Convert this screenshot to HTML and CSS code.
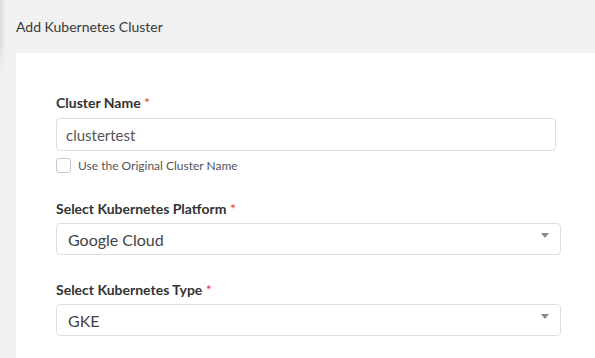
FILE: index.html
```html
<!DOCTYPE html>
<html lang="en">
<head>
    <meta charset="UTF-8">
    <meta name="viewport" content="width=device-width, initial-scale=1.0">
    <title>Add Kubernetes Cluster</title>
    <link rel="stylesheet" href="styles.css">
</head>
<body>
    <div class="side-shadow"></div>

    <div class="page-header">
        <h1>Add Kubernetes Cluster</h1>
    </div>

    <div class="card">
        <div class="form-group">
            <label class="field-label">Cluster Name <span class="req">*</span></label>
            <input type="text" class="text-input" value="clustertest">
            <label class="check-row">
                <span class="check-box"></span>
                <span class="check-text">Use the Original Cluster Name</span>
            </label>
        </div>

        <div class="form-group select-group">
            <label class="field-label">Select Kubernetes Platform <span class="req">*</span></label>
            <div class="select-box">
                <span class="select-value">Google Cloud</span>
                <b class="select-arrow"></b>
            </div>
        </div>

        <div class="form-group select-group">
            <label class="field-label">Select Kubernetes Type <span class="req">*</span></label>
            <div class="select-box">
                <span class="select-value">GKE</span>
                <b class="select-arrow"></b>
            </div>
        </div>
    </div>
</body>
</html>
```

FILE: styles.css
```css
html, body {
    height: 100%;
}

body {
    margin: 0;
    background: #f1f1f1;
    font-family: Lato, "Open Sans", sans-serif;
    color: #333;
    display: flex;
    flex-direction: column;
    overflow: hidden;
}

.side-shadow {
    position: absolute;
    left: 0;
    top: 0;
    width: 6px;
    height: 72px;
    background: linear-gradient(to right, rgba(0, 0, 0, 0.09), rgba(0, 0, 0, 0));
    -webkit-mask-image: linear-gradient(to bottom, #000 60%, transparent);
}

.page-header {
    padding: 17px 16px 0;
}

.page-header h1 {
    margin: 0;
    font-size: 14px;
    line-height: 20px;
    font-weight: 400;
    color: #3a3a3a;
}

.card {
    flex: 1;
    background: #fff;
    margin: 16px 0 0 16px;
    padding: 41px 0 0 40px;
}

.form-group {
    display: flex;
    flex-direction: column;
    align-items: flex-start;
}

.field-label {
    font-size: 14px;
    line-height: 18px;
    font-weight: 700;
    color: #333;
}

.req {
    color: #e2403f;
    font-weight: 400;
}

.text-input {
    box-sizing: border-box;
    width: 500px;
    height: 33px;
    margin-top: 6px;
    padding: 0 9px;
    border: 1px solid #dedede;
    border-radius: 4px;
    font-family: Lato, sans-serif;
    font-size: 15px;
    color: #555;
    outline: none;
}

.check-row {
    display: flex;
    align-items: center;
    margin-top: 7px;
    height: 14px;
}

.check-box {
    box-sizing: border-box;
    width: 15px;
    height: 15px;
    border: 1px solid #c8c8c8;
    border-radius: 3px;
    background: #fff;
}

.check-text {
    margin-left: 7px;
    font-size: 12px;
    color: #555;
}

.select-group {
    margin-top: 28px;
}

.select-group + .select-group {
    margin-top: 26px;
}

.select-box {
    position: relative;
    box-sizing: border-box;
    width: 505px;
    height: 32px;
    margin-top: 5px;
    padding: 0 11px;
    border: 1px solid #dedede;
    border-radius: 4px;
    display: flex;
    align-items: center;
}

.select-value {
    font-size: 16px;
    color: #444;
}

.select-arrow {
    position: absolute;
    right: 11px;
    top: 9px;
    width: 0;
    height: 0;
    border-style: solid;
    border-width: 5px 4px 0 4px;
    border-color: #888 transparent transparent transparent;
}
```
